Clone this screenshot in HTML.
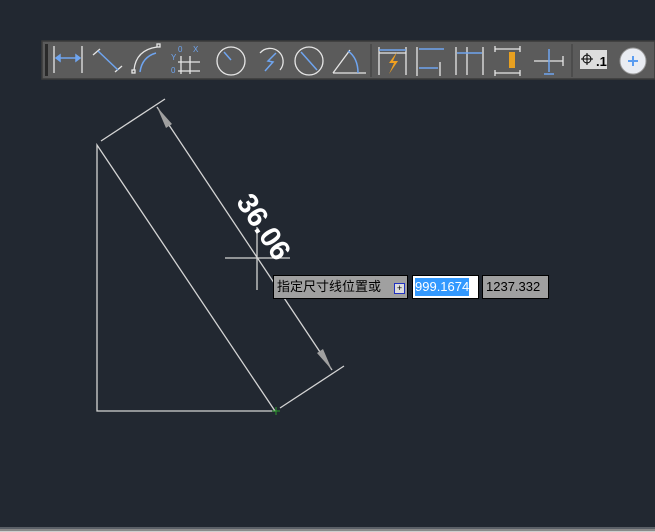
<!DOCTYPE html>
<html><head><meta charset="utf-8"><style>
html,body{margin:0;padding:0;width:655px;height:532px;overflow:hidden;background:#222831;font-family:"Liberation Sans","Noto Sans CJK SC",sans-serif}
.abs{position:absolute}
</style></head><body>
<svg class="abs" style="left:0;top:0" width="655" height="532" viewBox="0 0 655 532">
<rect width="655" height="532" fill="#222831"/>
<rect x="42" y="41" width="613" height="38" fill="#5b5b5b" stroke="#3a3a3a" stroke-width="1.5"/>
<g fill="#222"><rect x="45" y="44" width="3" height="32" fill="#2a2a2a"/></g>
<g fill="none" stroke="#e6e6e6" stroke-width="1.3">
<line x1="54" y1="46" x2="54" y2="73"/><line x1="82" y1="46" x2="82" y2="73"/>
<line x1="93" y1="55" x2="100" y2="49"/><line x1="115" y1="72" x2="122" y2="66"/>
<path d="M134 70 Q136 50 157 47"/><rect x="157" y="44" width="3" height="3"/><rect x="132" y="70" width="3" height="3"/>
<path d="M181 56 V74 M178 62 H200 M178 71 H200 M190 56 V74"/>
<circle cx="231" cy="61" r="14"/>
<path d="M260 53 A12 12 0 1 1 280 70"/>
<circle cx="309" cy="61" r="14"/>
<path d="M333 73 L350 50 M333 73 H366"/>
<line x1="371" y1="44" x2="371" y2="77" stroke="#444"/>
<path d="M379 47V75 M406 47V75 M379 53H406"/>
<path d="M417 47V72 M417 62V76 M440 62V76"/>
<path d="M456 47V75 M467 47V75 M483 47V75"/>
<path d="M495 46V52 M520 46V52 M495 70V76 M520 70V76 M495 49H520 M495 73H520"/>
<path d="M534 61H563 M563 56V66"/>
<line x1="572" y1="44" x2="572" y2="77" stroke="#444"/>
</g>
<g fill="none" stroke="#6fa5f0" stroke-width="1.5">
<line x1="56" y1="58" x2="80" y2="58"/><path d="M56 58l4-3v6z M80 58l-4-3v6z" fill="#6fa5f0"/>
<line x1="98" y1="51" x2="118" y2="70"/>
<path d="M140 72 Q142 57 156 53"/>
<path d="M224 52 L231 60"/>
<path d="M276 53 L268 61 L273 62 L265 71"/>
<path d="M301 52 L317 70"/>
<path d="M348 51 Q358 58 358 73"/>
<path d="M379 50H406"/>
<path d="M419 49H444 M419 68H438"/>
<path d="M457 53H482"/>
<path d="M549 49V72 M544 74H554"/>
</g>
<g fill="#6fa5f0" font-size="8" font-family="Liberation Sans"><text x="178" y="52">0</text><text x="171" y="60">Y</text><text x="171" y="73">0</text><text x="193" y="52">X</text></g>
<path d="M397 52 L389 63 H394 L389 74 L398 61 H393 Z" fill="#f0a020"/>
<rect x="509" y="52" width="6" height="16" fill="#e8a020"/>
<rect x="580" y="50" width="14" height="19" fill="#ddd"/><rect x="594" y="50" width="13" height="19" fill="#ddd"/>
<circle cx="587" cy="59" r="4" fill="none" stroke="#000"/><path d="M581 59H593M587 53V65" stroke="#000"/>
<text x="596" y="66" font-size="13" font-weight="bold" fill="#000">.1</text>
<circle cx="633" cy="61" r="13" fill="#e9ecf2" stroke="#999"/>
<path d="M628 61H638 M633 56V66" stroke="#5a9cf0" stroke-width="2"/>
<g stroke="#d4d4d4" stroke-width="1.3" fill="none">
<path d="M97 145 V411 H275 Z"/>
<line x1="101" y1="141" x2="165" y2="99"/>
<line x1="280" y1="408" x2="344" y2="366"/>
<line x1="157" y1="107" x2="332" y2="370"/>
<line x1="225" y1="258" x2="290" y2="258"/>
<line x1="257" y1="227" x2="257" y2="290"/>
</g>
<path d="M157 107 L172 124 L166 128 Z M332 370 L317 353 L323 349 Z" fill="#a0a0a0"/>
<path d="M272 411H280M276 407V415" stroke="#2a9a2a"/>
<text transform="translate(262 228) rotate(56.4)" text-anchor="middle" dominant-baseline="middle" font-size="29" font-weight="bold" fill="#fff" font-family="Liberation Sans">36.06</text>
<rect x="0" y="527" width="655" height="2" fill="#5a5f66"/>
<rect x="0" y="529" width="655" height="2" fill="#8a8a8a"/>
<rect x="0" y="531" width="655" height="1" fill="#cfcfcf"/>
</svg>
<div class="abs" style="left:273px;top:275px;height:22px;background:#a0a0a0;border:1px solid #000;font-size:13px;line-height:22px;color:#000;padding-left:3px;width:130px">指定尺寸线位置或</div>
<div class="abs" style="left:394px;top:283px;width:9px;height:9px;background:#ddd;border:1px solid #2030c0;font-size:9px;line-height:9px;text-align:center;color:#000">+</div>
<div class="abs" style="left:412px;top:275px;width:65px;height:22px;background:#fff;border:1px solid #000"><span style="background:#3399ff;color:#fff;font-size:13px;line-height:18px;display:inline-block;margin:2px 0 0 2px">999.1674</span></div>
<div class="abs" style="left:482px;top:275px;background:#a0a0a0;border:1px solid #000;font-size:13px;line-height:22px;color:#000;padding-left:3px;box-sizing:border-box;width:67px;height:24px">1237.332</div>
</body></html>
